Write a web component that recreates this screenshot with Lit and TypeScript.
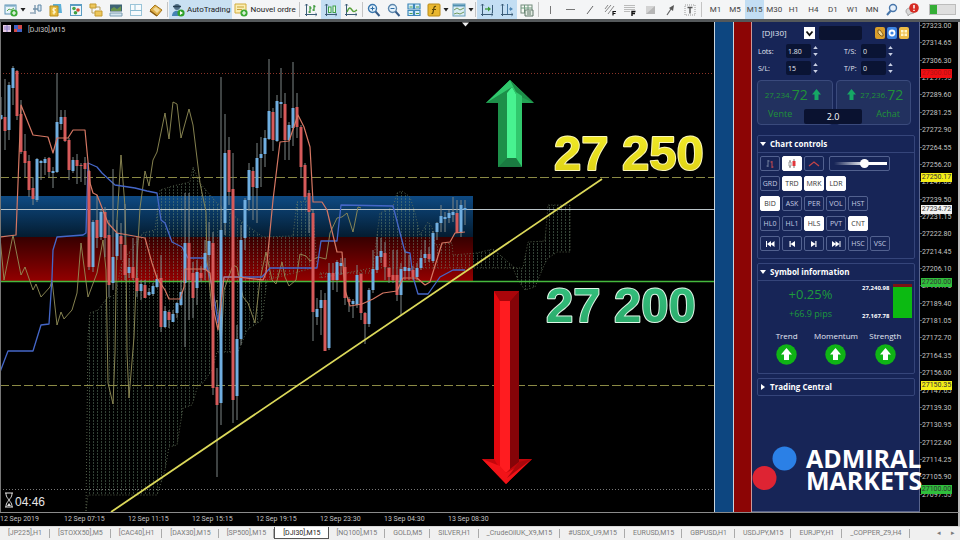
import { LitElement, html, svg, css, nothing } from "lit";
import { customElement, state } from "lit/decorators.js";
import { classMap } from "lit/directives/class-map.js";
import { styleMap } from "lit/directives/style-map.js";

/* ---------- market data ---------- */

// x, high, low, body top, body bottom, direction (1 = up, 0 = down)
const CANDLES: number[][] = [
  [1, 97, 120, 115, 119, 1], [5, 79, 150, 117, 131, 0], [9, 82, 140, 85, 130, 1],
  [13, 66, 105, 68, 88, 1], [17, 70, 120, 71, 116, 0], [21, 100, 154, 114, 152, 0],
  [25, 134, 177, 151, 163, 0], [29, 155, 197, 161, 190, 0], [33, 177, 205, 188, 199, 0],
  [37, 158, 202, 159, 200, 1], [41, 160, 180, 161, 163, 1], [45, 157, 175, 159, 163, 1],
  [49, 157, 177, 158, 172, 0], [53, 167, 188, 171, 173, 1], [57, 73, 173, 122, 172, 1],
  [61, 110, 130, 117, 124, 1], [65, 110, 142, 117, 141, 0], [69, 138, 180, 140, 170, 0],
  [73, 157, 173, 160, 171, 1], [77, 154, 184, 160, 166, 0], [81, 163, 182, 165, 166, 0],
  [85, 157, 185, 163, 169, 0], [89, 170, 270, 171, 267, 0], [93, 220, 272, 222, 267, 1],
  [97, 195, 248, 220, 238, 0], [101, 210, 240, 212, 237, 1], [105, 207, 257, 212, 238, 0],
  [109, 220, 297, 235, 285, 0], [113, 169, 290, 257, 283, 1], [117, 220, 260, 233, 256, 1],
  [121, 223, 260, 236, 244, 0], [125, 204, 280, 245, 275, 0], [129, 258, 278, 267, 273, 1],
  [133, 238, 280, 267, 278, 0], [137, 237, 297, 278, 291, 0], [141, 280, 300, 284, 291, 1],
  [145, 280, 298, 285, 298, 0], [149, 288, 296, 292, 295, 1], [153, 283, 296, 286, 294, 1],
  [157, 275, 288, 279, 287, 1], [161, 255, 332, 278, 327, 0], [165, 306, 328, 311, 327, 1],
  [169, 310, 328, 312, 320, 0], [173, 310, 322, 314, 322, 1], [177, 302, 318, 303, 313, 1],
  [181, 280, 306, 292, 305, 1], [185, 193, 347, 243, 283, 1], [189, 193, 320, 243, 280, 0],
  [193, 262, 318, 273, 298, 0], [197, 260, 305, 272, 288, 1], [201, 266, 282, 273, 278, 0],
  [205, 240, 280, 253, 270, 1], [209, 222, 275, 241, 255, 1], [213, 232, 395, 243, 388, 0],
  [217, 368, 477, 387, 405, 0], [221, 77, 425, 230, 403, 1], [225, 114, 235, 153, 223, 1],
  [229, 137, 205, 150, 192, 0], [233, 153, 423, 189, 400, 0], [237, 325, 420, 339, 396, 1],
  [241, 225, 345, 240, 339, 1], [245, 198, 250, 200, 238, 1], [249, 163, 211, 170, 200, 1],
  [253, 167, 220, 171, 187, 0], [257, 143, 223, 158, 188, 1], [261, 137, 187, 154, 158, 1],
  [265, 130, 167, 138, 154, 1], [269, 59, 140, 111, 139, 1], [273, 108, 151, 112, 140, 0],
  [277, 95, 142, 101, 141, 1], [281, 68, 118, 102, 104, 1], [285, 93, 160, 104, 140, 0],
  [289, 122, 160, 125, 140, 1], [293, 62, 146, 108, 128, 1], [297, 93, 138, 107, 127, 0],
  [301, 125, 178, 127, 167, 0], [305, 163, 200, 165, 197, 0], [309, 190, 233, 193, 212, 0],
  [313, 210, 341, 213, 312, 0], [317, 298, 325, 309, 317, 1], [321, 290, 335, 300, 308, 1],
  [325, 293, 351, 300, 351, 0], [329, 263, 350, 273, 348, 1], [333, 263, 290, 273, 280, 0],
  [337, 260, 292, 262, 280, 1], [341, 258, 275, 263, 266, 1], [345, 258, 305, 267, 298, 0],
  [349, 297, 312, 299, 302, 0], [353, 299, 318, 301, 304, 1], [357, 265, 308, 275, 305, 1],
  [361, 273, 320, 274, 313, 0], [365, 312, 344, 313, 324, 0], [369, 288, 327, 290, 324, 1],
  [373, 250, 293, 269, 290, 1], [377, 237, 273, 256, 270, 1], [381, 238, 263, 251, 257, 1],
  [385, 242, 280, 253, 267, 0], [389, 267, 283, 268, 277, 0], [393, 250, 283, 275, 280, 0],
  [397, 250, 301, 275, 295, 0], [401, 263, 315, 269, 295, 1], [405, 250, 280, 267, 271, 1],
  [409, 255, 280, 268, 271, 1], [413, 266, 280, 270, 277, 0], [417, 263, 280, 268, 277, 1],
  [421, 250, 270, 258, 268, 1], [425, 240, 263, 254, 258, 1], [429, 247, 262, 254, 259, 0],
  [433, 231, 263, 233, 261, 1], [437, 222, 240, 223, 232, 1], [441, 205, 232, 216, 223, 1],
  [445, 212, 232, 217, 219, 1], [449, 210, 223, 213, 218, 1], [453, 197, 222, 212, 215, 1],
  [457, 200, 233, 213, 233, 0], [461, 200, 237, 205, 233, 1], [465, 200, 225, 208, 210, 1],
];

const TENKAN =
  "0,237 16,235 21,105 33,135 48,137 53,153 57,138 68,138 73,130 85,130 90,183 93,193 97,195 108,223 117,233 145,238 152,263 157,278 165,290 169,299 180,299 184,287 185,269 205,269 210,273 214,312 218,330 224,277 237,277 263,280 266,273 273,200 280,142 289,141 298,115 304,127 310,147 313,202 322,202 327,210 337,252 342,252 345,290 350,306 362,304 373,299 383,293 397,291 403,278 417,278 425,285 430,282 442,243 450,242 455,233 465,232";
const KIJUN =
  "0,372 8,351 33,351 41,325 49,324 52,278 53,250 57,237 83,235 86,233 88,163 97,167 102,173 115,185 135,188 147,191 157,193 161,220 165,223 172,242 182,247 188,258 204,258 208,270 213,290 218,323 224,277 262,277 270,268 317,268 321,241 337,241 341,205 393,206 405,252 410,253 413,277 418,294 428,294 440,277 453,270 465,270";
const CHIKOU =
  "0,237 4,280 13,235 21,275 25,267 33,290 36,284 41,297 50,287 52,280 57,325 61,312 64,319 72,310 77,293 81,243 88,297 97,273 103,240 106,270 108,383 113,404 115,353 117,220 121,155 125,207 126,247 127,353 129,398 134,337 137,260 140,208 145,171 149,186 153,160 157,152 165,113 169,139 173,102 177,104 181,138 189,109 193,125 200,183 206,212 207,260 212,310 217,300 221,347 224,290 233,265 237,267 243,297 248,303 255,323 260,280 266,252 272,280 276,284 282,262 285,277 289,286 296,280 300,254 306,256 310,261 318,257 326,259 330,233 337,218 342,217 347,213 353,232 358,207 361,208";

const CLOUDS = [
  "86,511 88,337 90,313 98,310 107,298 115,295 122,262 143,233 155,230 160,190 173,186 190,182 193,167 200,183 217,203 230,213 263,237 293,236 297,202 308,201 313,213 317,267 267,280 262,320 247,330 238,352 217,352 212,370 203,383 198,385 192,405 183,408 177,445 169,447 165,470 157,495 88,495",
  "320,273 372,273 380,213 393,207 397,193 402,191 410,197 415,213 420,235 428,222 432,227 435,245 452,243 453,255 477,253 493,249 515,268 372,268 320,278",
  "513,268 523,268 528,242 545,241 548,205 570,205 570,252 557,252 547,259 542,270 535,287 525,290 518,280",
];

const FIRST_PRICE = 27323;
const STEP = 8.35;
const LABELS = Array.from({ length: 28 }, (_, i) => (FIRST_PRICE - STEP * i).toFixed(2));

// position is a share of the chart's height
const LEVELS = [
  { text: "27300.00", at: 51, tone: "sell" },
  { text: "27250.17", at: 155, tone: "target" },
  { text: "27234.72", at: 187, tone: "last" },
  { text: "27200.00", at: 260, tone: "buy" },
  { text: "27150.35", at: 363, tone: "target" },
  { text: "27100.00", at: 467, tone: "buy" },
];

const TIMES = [
  "12 Sep 2019", "12 Sep 07:15", "12 Sep 11:15", "12 Sep 15:15",
  "12 Sep 19:15", "12 Sep 23:30", "13 Sep 04:30", "13 Sep 08:30",
];

const TABS = [
  "[JP225],H1", "[STOXX50],M5", "[CAC40],H1", "[DAX30],M15", "[SP500],M15", "[DJI30],M15",
  "[NQ100],M15", "GOLD,M5", "SILVER,H1", "_CrudeOilUK_X9,M15", "#USDX_U9,M15", "EURUSD,M15",
  "GBPUSD,H1", "USDJPY,M15", "EURJPY,H1", "_COPPER_Z9,H4",
];

/* ---------- toolbar icons, all on a 14 x 14 grid ---------- */

const plus = svg`<circle cx="10" cy="10" r="3.6" fill="#3cab35"/><path d="M10 8v4M8 10h4" stroke="#fff" stroke-width="1.2"/>`;
const axes = svg`<path d="M2.5 1v12M1 11.5h12M1.200 2.500L2.500 1l1.300 1.500M11.500 10.200L13 11.500l-1.500 1.300" stroke="#3c5d78" fill="none"/>`;

const ICONS: Record<string, unknown> = {
  newChart: svg`<rect x="1" y="2" width="11" height="9" fill="#e9f4fb" stroke="#5b93b5"/><path d="M2 3h9" stroke="#5b93b5"/><path d="M3 8l2-2 2 1 3-2" stroke="#59a84b" fill="none"/>${plus}`,
  profiles: svg`<path d="M6 2v9M4 6h5" stroke="#7290a8" fill="none" stroke-width="1.300"/><path d="M1 10h4" stroke="#9ab" stroke-width="1.500"/><path d="M9 2h3v6H9z" fill="#dbe8f2" stroke="#5e86a5"/>`,
  marketWatch: svg`<path d="M4 1h8l1 9H4z" fill="#5db0d8"/><path d="M1 3h8v10H1z" fill="#e6b93c" stroke="#b98d1d"/><path d="M7 5.500c-3-1-4 1.500-2 2.200s1.500 3-1.500 2M5 4.500v7" stroke="#fff6cf" fill="none" stroke-width="1.200"/>`,
  dataWindow: svg`<rect x="1.500" y="1.500" width="11" height="11" fill="#eef6fb" stroke="#5b9cc2"/><path d="M2 2.500h10" stroke="#5b9cc2"/><circle cx="5" cy="5.500" r="1.800" fill="#4aa64a"/><circle cx="9" cy="7" r="1.800" fill="#d9482f"/><circle cx="6.500" cy="9.800" r="1.800" fill="#3e9e3e"/>`,
  navigator: svg`<path d="M1 1h6v4H1zM6 8h7v5H6z" fill="#edc75c" stroke="#c59b2e"/><path d="M3 5v5h3M6 4h5v3" stroke="#b9a15c" fill="none"/>`,
  terminal: svg`<rect x="1" y="1.500" width="12" height="7" fill="#3d6275"/><path d="M2 6l3-2 3 2 4-3v5H2z" fill="#69944d"/><path d="M1 10h12v3H1z" fill="#d5e5ef" stroke="#7b9db2"/>`,
  tester: svg`<rect x="1.500" y="1.500" width="11" height="11" fill="#f7fbfd" stroke="#9ac4d8"/><path d="M1 7.500h12M6 2v5" stroke="#8bbcd2"/>`,
  book: svg`<path d="M1 7l5-5 7 5-5 6z" fill="#e0b04a" stroke="#a8791c"/><path d="M4 6l3-2 4 3-3 3z" fill="#f3dc9c"/><path d="M1 8l7 5" stroke="#8a5c10" stroke-width="1.500"/>`,
  auto: svg`<circle cx="6" cy="4" r="3" fill="#4f6e86"/><path d="M1 13c0-7 10-7 10 0z" fill="#4383b5"/><path d="M2 3.500h8" stroke="#263f52" stroke-width="1.500"/><circle cx="10" cy="10" r="3.600" fill="#2fa12c"/><path d="M9 8l3 2-3 2z" fill="#fff"/>`,
  order: svg`<path d="M1 1h11v9H1z" fill="#fbeeb2" stroke="#d3ac3d"/><path d="M3 4h7M3 6.500h5" stroke="#c7a33b"/>${plus}`,
  bars: svg`${axes}<path d="M6 3v7M4.500 9H6M6 5h1.500M10 2v6M8.500 7H10M10 3.500h1.500" stroke="#3f9a3c" stroke-width="1.300"/>`,
  candles: svg`${axes}<rect x="4.500" y="4" width="2.500" height="5.500" fill="#eafbe7" stroke="#3fa04a"/><rect x="9" y="3" width="2.500" height="6.500" fill="#eafbe7" stroke="#3fa04a"/>`,
  line: svg`${axes}<path d="M3 9c2-5 3-5 5-2s3 1 5 0" stroke="#58a13a" fill="none" stroke-width="1.400"/>`,
  zoomIn: svg`<circle cx="5.500" cy="5.500" r="4" fill="#e3f1fb" stroke="#3976ad" stroke-width="1.400"/><path d="M5.500 3.500v4M3.500 5.500h4" stroke="#2d6ca5"/><path d="M8.500 8.500L12.500 13" stroke="#355d8a" stroke-width="2"/>`,
  zoomOut: svg`<circle cx="5.500" cy="5.500" r="4" fill="#e3f1fb" stroke="#5d87ad" stroke-width="1.400"/><path d="M3.500 5.500h4" stroke="#2d6ca5"/><path d="M8.500 8.500L12.500 13" stroke="#355d8a" stroke-width="2"/>`,
  tile: svg`<path d="M1 1h5.500v5H1zM7.500 1H13v5H7.500zM1 7.500h5.500v5H1zM7.500 7.500H13v5H7.500z" fill="#d7eefa" stroke="#3d87b8" stroke-width="1.200"/><path d="M2.500 4h3M9 4h3M2.500 10.500h3M9 10.500h3" stroke="#4da04c"/>`,
  indicator: svg`<rect x="1" y="1" width="12" height="12" rx="1" fill="#e9b72f" stroke="#b98a18"/><path d="M9 3.500c-2-.5-2 1-2.500 3.500S6 11 4.500 10.500M5 6.500h4" stroke="#5d4606" fill="none" stroke-width="1.200"/>`,
  template: svg`<rect x="1" y="1" width="12" height="12" fill="#d9ecf5" stroke="#6ba2bd"/><path d="M1 2.500h12" stroke="#4f8fb0" stroke-width="2"/><path d="M2 7l3-2 3 2 4-2M2 11l3-1 3 1 4-2" stroke="#719b5e" fill="none"/>`,
  scroll: svg`${axes}<path d="M5 6h5" stroke="#3f9a3c" stroke-width="1.300"/><path d="M8 3.500L11 6 8 8.500z" fill="#3f9a3c"/><path d="M12.500 2v8" stroke="#3c5d78"/>`,
  shift: svg`${axes}<path d="M7.500 1v10" stroke="#4a7ba4"/><path d="M9 6h3" stroke="#4f87b4"/><path d="M10 4l3 2-3 2z" fill="#4f87b4"/>`,
  grid: svg`<rect x="1" y="2" width="11" height="8" fill="#f5f8f3" stroke="#738b7c"/><path d="M1 5h11M4.500 2v8M8 2v8" stroke="#6f9a7e"/><path d="M5 7h8v6H5z" fill="#e2ece3" stroke="#60796a"/><path d="M7 9h4M7 11h4" stroke="#60796a"/>`,
  vline: svg`<path d="M7.500 3v8" stroke="#777"/>`,
  hline: svg`<path d="M3 6.500h9" stroke="#777"/>`,
  slope: svg`<path d="M4 11l6-8" stroke="#666"/>`,
  channel: svg`<path d="M2 9l6-7M5 11l6-8M2 6l3-4" stroke="#888"/><path d="M10 12.500V8.500h3M10 10.500h2.500" stroke="#111" stroke-width="1.200" fill="none"/>`,
  fibo: svg`<path d="M1 2.500h11M1 4.500h11M1 6.500h11M1 8.500h6" stroke="#bbb"/><path d="M9 13V8.500h3.500M9 10.500h3" stroke="#111" stroke-width="1.400" fill="none"/>`,
  shape: svg`<path d="M3 3h9v8H3z" fill="#b6b6b6"/><path d="M3 3h9L3 11z" fill="#d3d3d3"/>`,
  arrow: svg`<path d="M4 12l4-6" stroke="#666" stroke-width="1.200"/><path d="M6 5l5-3-1 6z" fill="#555"/>`,
  label: svg`<rect x="2" y="2" width="10" height="10" fill="none" stroke="#999" stroke-dasharray="1 1"/><path d="M4.500 4.500h5M7 4.500v6" stroke="#555" stroke-width="1.400"/>`,
  search: svg`<circle cx="8" cy="5" r="3.500" fill="#e8f1fb" stroke="#4876aa" stroke-width="1.400"/><path d="M5.500 8L2 12" stroke="#4876aa" stroke-width="2"/>`,
  alert: svg`<path d="M1 8c0-3 5-4 8-2v4L5 11l-2 2v-2c-1 0-2-1-2-3z" fill="#d8d8d8" stroke="#aaa"/><circle cx="9" cy="5" r="4.800" fill="#d62a22"/><path d="M9 2v3.500M9 6.800v1.300" stroke="#fff" stroke-width="1.500"/>`,
};

const icon = (name: string) => html`<svg class="ico" viewBox="0 0 14 14" aria-hidden="true">${ICONS[name]}</svg>`;

/* ---------- chart ---------- */

@customElement("market-chart")
export class MarketChart extends LitElement {
  static styles = css`
    :host { display: block; background: #000; border-left: 1px solid #777; box-sizing: border-box; }
    svg { display: block; width: 100%; height: 100%; }
    .wick { stroke: #7d8585; }
    .up { fill: #70aee0; }
    .down { fill: #d65a5a; }
    .ind { fill: none; stroke-linejoin: round; }
    .caption { font: 7px Roboto, "Open Sans", sans-serif; fill: #ccc; }
    .clock { font: 12px "Liberation Sans", sans-serif; fill: #e6e6e6; }
    .price { font: bold 49px "Liberation Sans", sans-serif; stroke-width: 2px; paint-order: stroke; stroke-linejoin: round; }
    .price.high { fill: url(#gold); stroke: #fbf7b8; }
    .price.low { fill: url(#jade); stroke: #dff5e6; }
  `;

  render() {
    return html`
      <svg viewBox="1 22 713 490" preserveAspectRatio="xMinYMin meet" role="img" aria-label="DJI30 M15 chart">
        <defs>
          <linearGradient id="blueBand" x2="0" y2="1">
            <stop offset="0" stop-color="#0e4a83"/><stop offset="1" stop-color="#041c30"/>
          </linearGradient>
          <linearGradient id="redBand" x2="0" y2="1">
            <stop offset="0" stop-color="#360000"/><stop offset="1" stop-color="#930000"/>
          </linearGradient>
          <linearGradient id="gold" x2="0" y2="1">
            <stop offset="0" stop-color="#f4ee2b"/><stop offset="1" stop-color="#dccf12"/>
          </linearGradient>
          <linearGradient id="jade" x2="0" y2="1">
            <stop offset="0" stop-color="#35c27f"/><stop offset="1" stop-color="#2aa869"/>
          </linearGradient>
          <pattern id="dots" width="4" height="3" patternUnits="userSpaceOnUse">
            <rect x="1" width="1" height="2" fill="#6f9076" opacity=".45"/>
          </pattern>
        </defs>

        <rect x="0" y="196" width="473" height="41" fill="url(#blueBand)"/>
        <rect x="0" y="237" width="473" height="44" fill="url(#redBand)"/>

        ${CLOUDS.map((c) => svg`<polygon points=${c} fill="url(#dots)" stroke="#68755b" stroke-dasharray="1 2" stroke-width=".8"/>`)}

        <path d="M0 73.500H714" stroke="#8a3328" stroke-dasharray="1 2"/>
        <path d="M0 177.500H714M0 385.500H714" stroke="#8b8a45" stroke-dasharray="9 3"/>
        <path d="M0 489.500H714" stroke="#777" stroke-dasharray="1 2"/>
        <path d="M0 209.500H714" stroke="#b9c3c8"/>
        <path d="M0 281.500H714" stroke="#45b83d" stroke-width="1.500"/>

        <polyline class="ind" points=${CHIKOU} stroke="#938e58" stroke-width=".9"/>
        <polyline class="ind" points=${KIJUN} stroke="#4567c8" stroke-width="1.300"/>

        ${CANDLES.map(([x, hi, lo, top, bottom, up]) => svg`
          <path class="wick" d=${`M${x} ${hi}V${lo}`}/>
          <rect class=${up ? "up" : "down"} x=${x - 1.5} y=${top} width="3" height=${bottom - top}/>`)}

        <polyline class="ind" points=${TENKAN} stroke="#d57763" stroke-width="1.200"/>
        <path d="M111 512L602 179" stroke="#dcd95a" stroke-width="1.800"/>

        <g>
          <path d="M510 80L534 103H522V167H498V103H486Z" fill="#22a354"/>
          <path d="M510 80L534 103 515 94 514 89 509 92 507 158 498 167V103H486Z" fill="#1d8f49"/>
          <path d="M507 93L512 87 516 94V158H507Z" fill="#48f290"/>
          <path d="M510 80L516 92 522 96V167L516 158V94L512 87 486 103Z" fill="#31c86d"/>
          <path d="M498 167L507 158H516L522 167Z" fill="#1a7b41"/>
        </g>
        <g>
          <path d="M494 291H519V459H532L506 484 482 459H494Z" fill="#c4060b"/>
          <path d="M494 291L500 301V469L494 459Z" fill="#e3080e"/>
          <path d="M519 291L510 301V469L519 462Z" fill="#850408"/>
          <path d="M494 291H519L510 301H500Z" fill="#a9050a"/>
          <path d="M500 301H510V469L506 473 500 468Z" fill="#ff1c20"/>
          <path d="M482 459L500 466 506 473 532 459 506 484Z" fill="#f21318"/>
          <path d="M519 462L532 459 507 478Z" fill="#a9070b"/>
        </g>

        <text class="price high" x="554" y="170">27 250</text>
        <text class="price low" x="546" y="322">27 200</text>

        <rect x="3" y="25" width="8" height="7" fill="#e6c9e2"/>
        <path d="M4 27h6M4 29h6M7 25v7" stroke="#8a7ec9"/>
        <rect x="14" y="25" width="8" height="7" fill="#4262c4"/>
        <path d="M18 25h4v4h-4zM14 29h3v3h-3z" fill="#d34a4a"/>
        <text class="caption" x="28" y="32">[DJI30],M15</text>
        <path d="M462 22.500h7l-3.500 4z" fill="#eee"/>

        <path d="M5 493h8M5 507h8M6 493c0 5 2.500 5 2.500 7s-2.500 2-2.500 7M12 493c0 5-2.500 5-2.500 7s2.500 2 2.500 7" stroke="#e6e6e6" fill="none"/>
        <path d="M7 506l2-3 2 3z" fill="#e6e6e6"/>
        <text class="clock" x="15" y="506">04:46</text>
      </svg>`;
  }
}

/* ---------- trade panel ---------- */

@customElement("trade-panel")
export class TradePanel extends LitElement {
  @state() private active = new Set(["candles", "TRD", "MRK", "LDR", "BID", "HLS", "CNT"]);

  static styles = css`
    :host {
      display: flex; flex-direction: column; box-sizing: border-box; background: #172557; color: #e4e8f3;
      padding: 4px 4px 0 5px; font: 8px/12px "Open Sans", "Noto Sans", sans-serif; border: solid #59648c; border-width: 0 1px 1px 0;
    }
    button, input, select { font: inherit; color: inherit; margin: 0; padding: 0; border: 0; box-sizing: border-box; min-width: 0; }
    button { cursor: pointer; background: none; }
    .head { display: flex; align-items: center; height: 14px; gap: 4px; padding-left: 5px; }
    .pick { position: relative; flex: 0 0 53px; display: flex; }
    .pick select { appearance: none; width: 100%; height: 14px; background: none; }
    .chev { position: absolute; right: 0; top: 1px; width: 11px; height: 12px; background: #fff; pointer-events: none; }
    .search { width: 43px; height: 14px; background: #0b1330; border-radius: 2px; }
    .tools { display: flex; gap: 1px; margin-left: 9px; }
    .tools button, .tools svg { display: block; width: 11px; height: 12px; }
    .fields { display: grid; grid-template-columns: 29px 25px 33px 17px 25px 8px; row-gap: 3px; padding-top: 4px; height: 33px; box-sizing: border-box; align-items: center; }
    .fields label { line-height: 13px; font-size: 7px; }
    .fields label.left { padding-left: 1px; }
    .fields input { background: #0a1434; height: 14px; padding-left: 2px; border-radius: 2px; font-size: 7px; }
    .spin { display: flex; flex-direction: column; gap: 4px; padding-left: 2px; }
    .spin button, .spin svg { display: block; width: 5px; height: 3px; }
    .deal { display: grid; grid-template-columns: 1fr 1fr; gap: 3px; margin: 7px 4px 0 0; position: relative; color: #209238; }
    .deal button { height: 45px; border-radius: 4px; background: #22315f; border: 1px solid #3a4a7c; display: grid; grid-template-rows: 27px 15px; text-align: left; color: inherit; }
    .quote { display: flex; align-items: center; justify-content: center; font-size: 8px; line-height: 14px; }
    .quote b { font-weight: 400; font-size: 14px; }
    .quote svg { width: 9px; height: 11px; margin: 0 4px; }
    .word { font-size: 9px; padding-left: 10px; }
    .buy .word { padding: 0 10px 0 0; text-align: right; }
    .spread { position: absolute; left: 47px; top: 29px; width: 58px; height: 15px; background: #0a1230; border-radius: 2px; color: #fff; font-size: 9px; line-height: 15px; text-align: center; }
    .card { border: 1px solid #35457a; border-radius: 2px; margin-top: 4px; }
    .card.first { margin-top: 10px; }
    .title { display: flex; align-items: center; gap: 4px; width: 100%; height: 16px; padding-left: 2px; font-weight: 700; font-size: 8px; color: #fff; }
    .title svg { width: 6px; height: 6px; }
    .pad { border-top: 1px solid #35457a; padding: 3px 2px 7px; display: flex; flex-direction: column; gap: 5px; }
    .line { display: flex; gap: 2px; height: 15px; }
    .key { width: 20px; border: 1px solid #52618f; border-radius: 2px; font-size: 7px; line-height: 12px; text-align: center; color: #c5cce2; }
    .key.on { background: #fff; color: #333; border-color: #fff; }
    .key svg { display: block; width: 12px; height: 10px; margin: 1px auto 0; }
    .slide { width: 61px; height: 15px; border: 1px solid #52618f; border-radius: 2px; box-sizing: border-box; margin-left: 3px; display: flex; align-items: center; padding: 0 2px 0 4px; }
    .slide input { appearance: none; width: 100%; height: 3px; background: linear-gradient(90deg, #172557, #fff 60%); }
    .slide input::-webkit-slider-thumb { appearance: none; width: 9px; height: 9px; border-radius: 50%; background: #fff; }
    .info { border-top: 1px solid #35457a; padding: 3px 2px 8px; }
    .change { display: grid; grid-template-columns: 1fr 30px 19px; gap: 1px; height: 36px; }
    .pct { color: #1d9a3c; text-align: center; display: flex; flex-direction: column; justify-content: space-between; }
    .pct strong { font-weight: 400; font-size: 13px; line-height: 20px; }
    .pct span { font-size: 9px; }
    .range { display: flex; flex-direction: column; justify-content: space-between; font-size: 6px; line-height: 8px; font-weight: 700; color: #fff; }
    .meter { height: 34px; background: #0cba12; border-top: 3px solid #7c1414; box-sizing: border-box; }
    .signals { display: grid; grid-template-columns: 1fr 1fr 1fr; text-align: center; padding-top: 10px; margin: 0 2px; }
    .signals svg { display: block; width: 21px; height: 21px; margin: 2px auto 0; }
    .brand { margin: auto -2px 20px -5px; display: flex; align-items: flex-end; gap: 9px; }
    .brand svg { flex: 0 0 45px; height: 45px; }
    .brand span { font: bold 25px/22px "Open Sans", "Noto Sans", sans-serif; color: #fff; }
  `;

  private toggle(key: string) {
    const next = new Set(this.active);
    next.has(key) ? next.delete(key) : next.add(key);
    this.active = next;
  }

  private key(id: string, face: unknown = id) {
    return html`<button class=${classMap({ key: true, on: this.active.has(id) })} aria-label=${id}
      @click=${() => this.toggle(id)}>${face}</button>`;
  }

  private spin() {
    return html`<span class="spin">
      <button aria-label="Up"><svg viewBox="0 0 6 4"><path d="M0 4l3-4 3 4z" fill="#c9d0e4"/></svg></button>
      <button aria-label="Down"><svg viewBox="0 0 6 4"><path d="M0 0l3 4 3-4z" fill="#c9d0e4"/></svg></button>
    </span>`;
  }

  private title(text: string, open = true) {
    return html`<button class="title" aria-expanded=${open ? "true" : "false"}>
      <svg viewBox="0 0 6 6"><path d=${open ? "M0 1h6L3 5z" : "M1 0l4 3-4 3z"} fill="#fff"/></svg>${text}</button>`;
  }

  private upArrow() {
    return html`<svg viewBox="0 0 9 11"><path d="M4.500 0L9 5.500H6.500V11H2.500V5.500H0z" fill="#16a765"/></svg>`;
  }

  render() {
    const nav = (d: string) => html`<svg viewBox="0 0 12 10"><path d=${d} fill="#fff"/></svg>`;
    return html`
      <div class="head">
        <div class="pick">
          <select aria-label="Symbol"><option>[DJI30]</option></select>
          <svg class="chev" viewBox="0 0 11 12"><path d="M2.500 4.500l3 3.500 3-3.500" fill="none" stroke="#111" stroke-width="1.800"/></svg>
        </div>
        <input class="search" aria-label="Search symbol">
        <div class="tools">
          <button aria-label="Link"><svg viewBox="0 0 11 12"><rect width="10" height="12" rx="2" fill="#d99e2b"/><path d="M3 3l2 0 3 4v2H6L3 6z" fill="#f4d88c" stroke="#6c4a0c" stroke-width=".8"/></svg></button>
          <button aria-label="Settings"><svg viewBox="0 0 11 12"><rect width="10" height="12" rx="2" fill="#3d83e0"/><circle cx="5" cy="6" r="2.500" fill="none" stroke="#fff" stroke-width="1.800"/></svg></button>
          <button aria-label="Layout"><svg viewBox="0 0 11 12"><rect width="10" height="12" rx="2" fill="#edbb46"/><path d="M2 3h2.500v2.500H2zM5.500 3H8v2.500H5.500zM2 6.500h2.500V9H2zM5.500 6.500H8V9H5.500z" fill="#fff4c9"/></svg></button>
        </div>
      </div>

      <div class="fields">
        <label class="left" for="lots">Lots:</label><input id="lots" value="1.80">${this.spin()}
        <label for="ts">T/S:</label><input id="ts" value="0">${this.spin()}
        <label class="left" for="sl">S/L:</label><input id="sl" value="15">${this.spin()}
        <label for="tp">T/P:</label><input id="tp" value="0">${this.spin()}
      </div>

      <div class="deal">
        <button><span class="quote">27,234.<b>72</b>${this.upArrow()}</span><span class="word">Vente</span></button>
        <button class="buy"><span class="quote">${this.upArrow()}27,236.<b>72</b></span><span class="word">Achat</span></button>
        <div class="spread">2.0</div>
      </div>

      <section class="card first">
        ${this.title("Chart controls")}
        <div class="pad">
          <div class="line">
            ${this.key("bars", html`<svg viewBox="0 0 12 10"><path d="M4 1v7M2.500 7H4M4 2h1.500" stroke="#73809f" fill="none"/><path d="M8 2v7M6.500 3H8M8 8h1.500" stroke="#c9484e" fill="none"/></svg>`)}
            ${this.key("candles", html`<svg viewBox="0 0 12 10"><path d="M4 1v8M8 0v9" stroke="#777"/><path d="M3 3h2v4H3z" fill="#fff" stroke="#777" stroke-width=".7"/><path d="M6.500 2h3v5h-3z" fill="#e0353a"/></svg>`)}
            ${this.key("line", html`<svg viewBox="0 0 12 10"><path d="M1 7l5-4 5 4" stroke="#c24347" fill="none" stroke-width="1.300"/></svg>`)}
            <div class="slide"><input type="range" aria-label="Zoom" min="0" max="100" value="60"></div>
          </div>
          <div class="line">${["GRD", "TRD", "MRK", "LDR"].map((k) => this.key(k))}</div>
          <div class="line">${["BID", "ASK", "PER", "VOL", "HST"].map((k) => this.key(k))}</div>
          <div class="line">${["HL0", "HL1", "HLS", "PVT", "CNT"].map((k) => this.key(k))}</div>
          <div class="line">
            ${this.key("first", nav("M2 2h1v6H2zM7 2v6L3 5zM10.500 2v6l-4-3z"))}
            ${this.key("previous", nav("M3.500 2h1.200v6H3.500zM9 2v6L4.500 5z"))}
            ${this.key("next", nav("M7.300 2h1.200v6H7.300zM3 2v6l4.500-3z"))}
            ${this.key("last", nav("M9.500 2h1v6h-1zM5.500 2v6l4-3zM2 2v6l4-3z"))}
            ${["HSC", "VSC"].map((k) => this.key(k))}
          </div>
        </div>
      </section>

      <section class="card">
        ${this.title("Symbol information")}
        <div class="info">
          <div class="change">
            <div class="pct"><strong>+0.25%</strong><span>+66.9 pips</span></div>
            <div class="range"><span>27,240.98</span><span>27,167.78</span></div>
            <div class="meter"></div>
          </div>
          <div class="signals">
            ${["Trend", "Momentum", "Strength"].map((s) => html`<div>${s}
              <svg viewBox="0 0 21 21"><circle cx="10.500" cy="10.500" r="10.200" fill="#0fb415"/><path d="M10.500 4L16 10.500h-3V16H8v-5.500H5z" fill="#fff"/></svg></div>`)}
          </div>
        </div>
      </section>

      <section class="card">${this.title("Trading Central", false)}</section>

      <div class="brand">
        <svg viewBox="0 0 45 45"><circle cx="32.500" cy="12.500" r="12" fill="#2b80e6"/><circle cx="12.500" cy="32" r="12" fill="#de2433"/></svg>
        <span>ADMIRAL<br>MARKETS</span>
      </div>`;
  }
}

/* ---------- window ---------- */

@customElement("app-root")
export class AppRoot extends LitElement {
  @state() private tab = "[DJI30],M15";
  @state() private frame = "M15";

  static styles = css`
    :host { display: flex; flex-direction: column; min-height: 100vh; background: #000; font: 7px/10px Roboto, "Open Sans", sans-serif; color: #444; overflow-x: hidden; }
    button { font: inherit; color: inherit; margin: 0; padding: 0; border: 0; background: none; cursor: pointer; }
    .bar { display: flex; height: 19px; background: #f4f5f6; border-bottom: 3px solid #54585a; padding-left: 1px; white-space: nowrap; font-size: 8px; }
    .group { display: flex; align-items: center; }
    .tool { width: 20px; height: 19px; display: flex; align-items: center; justify-content: center; flex: none; }
    .tool.on, .frames button.on { background: #c3def3; }
    .drop { width: 6px; height: 19px; margin-left: -1px; flex: none; }
    .drop svg { display: block; width: 6px; }
    .ico { width: 14px; height: 14px; display: block; flex: none; }
    .wide { height: 19px; display: flex; align-items: center; gap: 2px; padding: 0 2px; flex: none; color: #222; }
    .wide.on { background: #c9e0f2; }
    .sep { width: 1px; height: 15px; margin: 2px 1px; background: #c4c4c4; flex: none; }
    .frames { flex: 0 0 176px; display: flex; margin-left: 3px; }
    .frames button { flex: 1; height: 19px; }
    .status { margin: 4px 4px 4px auto; width: 27px; background: linear-gradient(90deg, #35ae36 30%, #dedede 30%); border: 1px solid #bcbcbc; box-sizing: border-box; }
    .main { flex: 1; display: grid; grid-template-columns: minmax(0, 1fr) 19px 19px 168px 40px; }
    .strip { background: #0d4680; border-left: 1px solid #c9d5df; }
    .strip.red { background: #8c0505; border-right: 1px solid #c99; }
    .scale { position: relative; display: flex; flex-direction: column; justify-content: space-between; padding-bottom: 13px; border-right: 2px solid #bbb; color: #c4c4c4; line-height: 8px; }
    .scale span::before { content: "-"; }
    .scale .mark { position: absolute; left: 1px; right: 6px; text-align: center; line-height: 9px; color: #333; }
    .scale .mark::before { content: none; }
    .sell { background: #f00e12; }
    .scale .mark.sell { color: #b31414; }
    .target { background: #f4ee17; }
    .last { background: #f2f2f2; }
    .buy { background: #2fbe3c; }
    .times { display: flex; height: 13px; border-top: 1px solid #8b8b8b; color: #c4c4c4; line-height: 13px; border-right: 2px solid #bbb; }
    .times span { flex: 0 0 64px; }
    .tabs { display: flex; height: 14px; background: #f0f0f0; border-top: 1px solid #d8d8d8; box-sizing: border-box; white-space: nowrap; color: #7a7a7a; }
    .tabs button { padding: 0 7px 0 8px; flex: none; border-right: 1px solid #aaa; height: 9px; line-height: 9px; margin-top: 2px; }
    .tabs button.on { background: #fff; color: #222; border: 1px solid #555; border-top: 0; height: 12px; line-height: 12px; margin-top: 0; }
    .tabs .move { margin-left: auto; border: 0; padding: 0 5px; }
    .tabs .move + .move { margin-left: 0; }
  `;

  private tool(name: string, on = false) {
    return html`<button class=${classMap({ tool: true, on })} aria-label=${name}>${icon(name)}</button>`;
  }

  private drop() {
    return html`<button class="drop" aria-label="More"><svg viewBox="0 0 6 4"><path d="M.5 0h5L3 3.500z" fill="#222"/></svg></button>`;
  }

  render() {
    const sep = html`<span class="sep"></span>`;
    return html`
      <nav class="bar" aria-label="Toolbar">
        <div class="group">
          ${this.tool("newChart")}${this.drop()}
          ${["profiles", "marketWatch", "dataWindow", "navigator", "terminal", "tester"].map((n) => this.tool(n))}
          ${this.tool("book")}${sep}
          <button class="wide on">${icon("auto")}AutoTrading</button>
          <button class="wide">${icon("order")}Nouvel ordre</button>${sep}
          ${this.tool("bars")}${this.tool("candles", true)}${this.tool("line")}${sep}
          ${["zoomIn", "zoomOut", "tile", "indicator"].map((n) => this.tool(n))}${this.drop()}
          ${this.tool("template")}${this.drop()}${sep}
          ${this.tool("scroll", true)}${this.tool("shift", true)}${this.tool("grid")}${sep}
          ${["vline", "hline", "slope", "channel", "fibo", "shape", "arrow", "label"].map((n) => this.tool(n))}${sep}
        </div>
        <div class="frames">
          ${["M1", "M5", "M15", "M30", "H1", "H4", "D1", "W1", "MN"].map((f) => html`
            <button class=${f === this.frame ? "on" : nothing} @click=${() => (this.frame = f)}>${f}</button>`)}
        </div>
        ${this.tool("search")}${this.tool("alert")}
        <span class="status"></span>
      </nav>

      <main class="main">
        <market-chart></market-chart>
        <div class="strip"></div>
        <div class="strip red"></div>
        <trade-panel></trade-panel>
        <div class="scale">
          ${LABELS.map((l) => html`<span>${l}</span>`)}
          ${LEVELS.map((l) => html`<span class=${`mark ${l.tone}`}
            style=${styleMap({ top: `calc(${(l.at / 490) * 100}% - 4px)` })}>${l.text}</span>`)}
        </div>
      </main>

      <div class="times">${TIMES.map((t) => html`<span>${t}</span>`)}</div>

      <nav class="tabs" aria-label="Charts">
        ${TABS.map((t) => html`<button class=${t === this.tab ? "on" : nothing} @click=${() => (this.tab = t)}>${t}</button>`)}
        <button class="move" aria-label="Scroll left">◂</button>
        <button class="move" aria-label="Scroll right">▸</button>
      </nav>`;
  }
}
